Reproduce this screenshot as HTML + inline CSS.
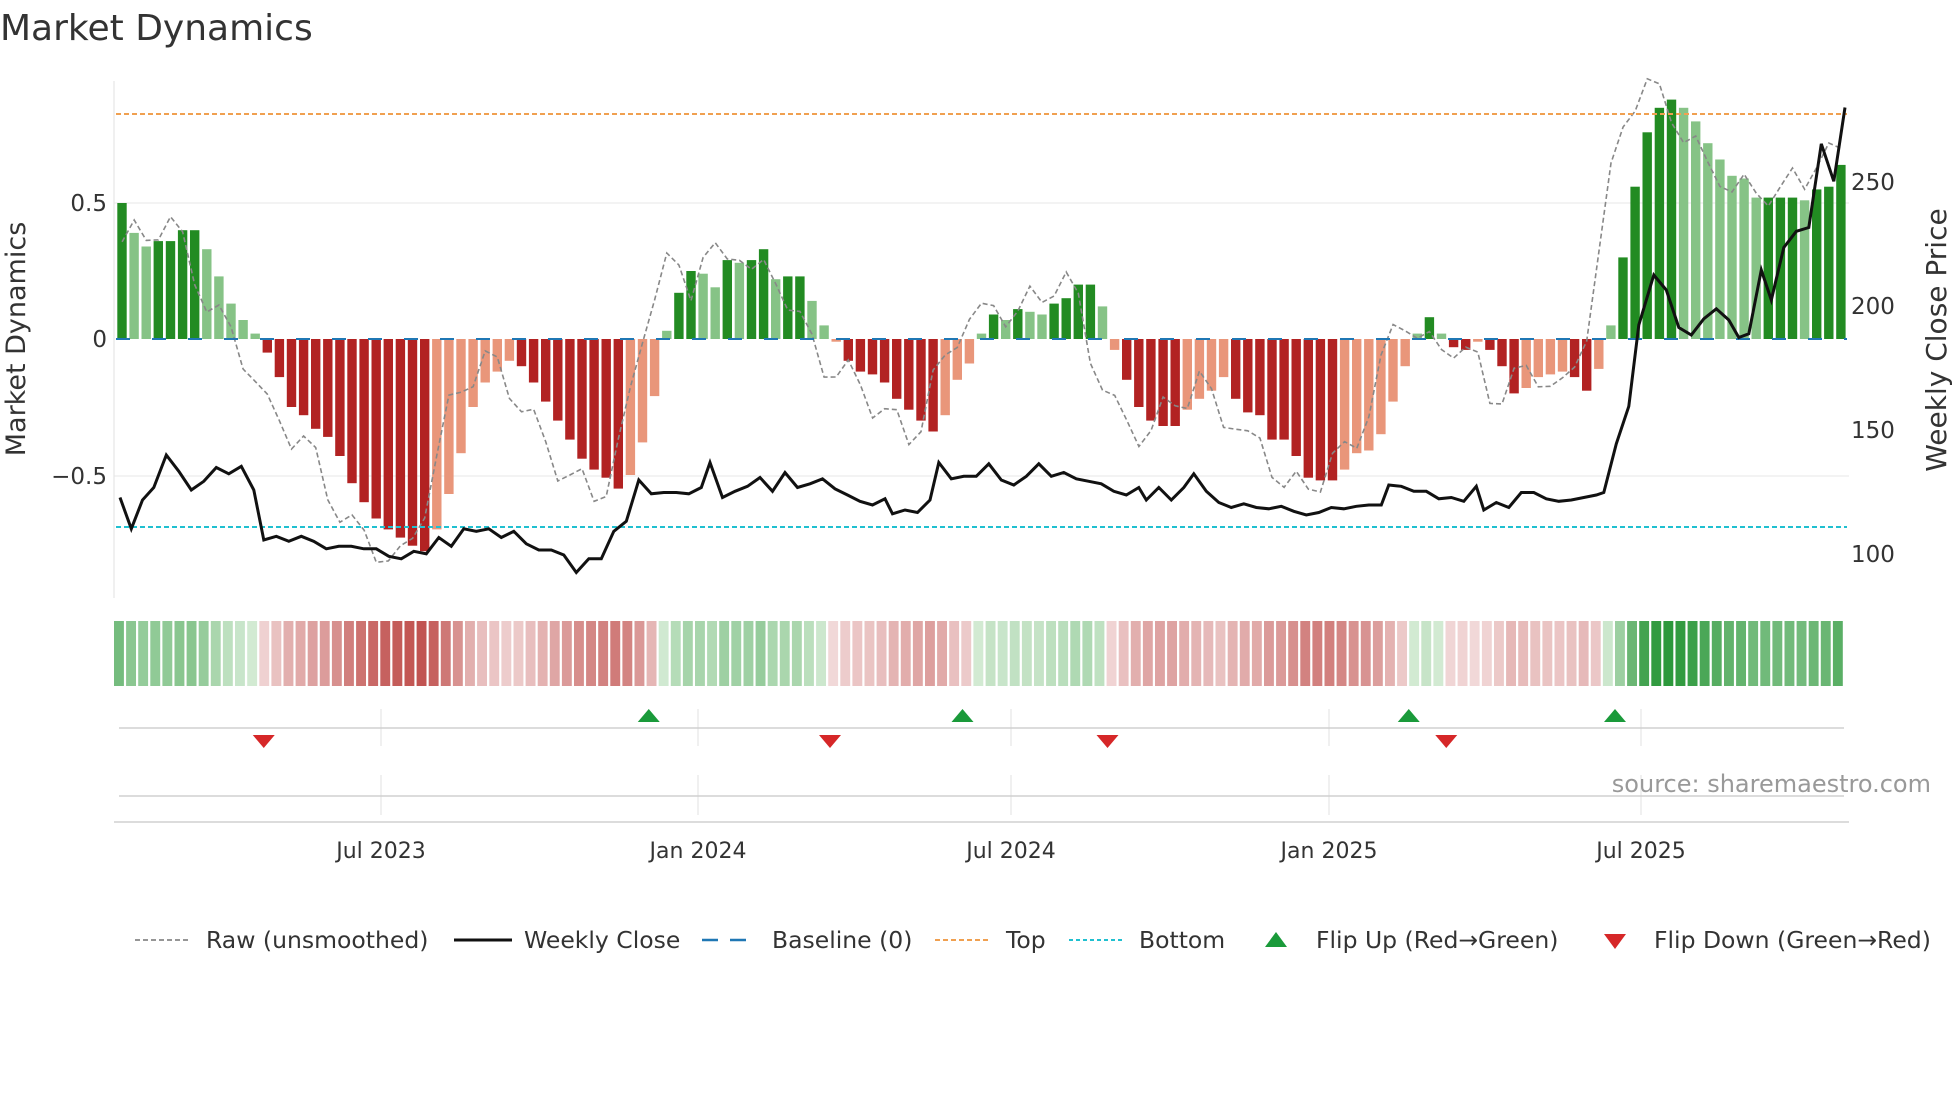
<!DOCTYPE html>
<html><head><meta charset="utf-8"><style>
html,body{margin:0;padding:0;background:#fff;}
body{width:1960px;height:1102px;overflow:hidden;font-family:"DejaVu Sans","Liberation Sans",sans-serif;}
</style></head><body>
<svg id="s" width="1960" height="1102" xmlns="http://www.w3.org/2000/svg" font-family="DejaVu Sans, Liberation Sans, sans-serif"></svg>
<script>
var V=[0.5,0.39,0.34,0.36,0.36,0.40,0.40,0.33,0.23,0.13,0.07,0.02,
-0.05,-0.14,-0.25,-0.28,-0.33,-0.36,-0.43,-0.53,-0.60,-0.66,-0.70,-0.73,-0.76,-0.78,
-0.70,-0.57,-0.42,-0.25,-0.16,-0.12,-0.08,
-0.10,-0.16,-0.23,-0.30,-0.37,-0.44,-0.48,-0.51,-0.55,-0.50,-0.38,-0.21,
0.03,0.17,0.25,0.24,0.19,0.29,0.28,0.29,0.33,0.22,0.23,0.23,0.14,0.05,
-0.01,-0.08,-0.12,-0.13,-0.16,-0.22,-0.26,-0.30,-0.34,-0.28,-0.15,-0.09,
0.02,0.09,0.07,0.11,0.10,0.09,0.13,0.15,0.20,0.20,0.12,
-0.04,-0.15,-0.25,-0.30,-0.32,-0.32,-0.26,-0.22,-0.19,-0.14,-0.22,-0.27,-0.28,-0.37,-0.37,-0.43,-0.51,-0.52,-0.52,-0.48,-0.42,-0.41,-0.35,-0.23,-0.10,
0.02,0.08,0.02,
-0.03,-0.04,-0.01,-0.04,-0.10,-0.20,-0.18,-0.14,-0.13,-0.12,-0.14,-0.19,-0.11,
0.05,0.30,0.56,0.76,0.85,0.88,0.85,0.80,0.72,0.66,0.60,0.59,0.52,0.52,0.52,0.52,0.51,0.55,0.56,0.64];
var P=[[96,398],[105,423],[114,400],[123,390],[133,364],[143,377],[153,392],[163,385],[173,374],[183,379],[193,373],[203,392],[211,432],[221,429],[231,433],[241,429],[251,433],[261,439],[271,437],[281,437],[291,439],[301,439],[311,445],[321,447],[331,441],[341,443],[351,430],[361,437],[371,423],[381,425],[391,423],[401,430],[411,425],[421,435],[431,440],[441,440],[451,444],[461,458],[471,447],[481,447],[491,425],[501,417],[511,384],[521,395],[531,394],[541,394],[551,395],[561,390],[568,370],[578,398],[588,393],[598,389],[608,382],[618,393],[628,378],[638,390],[648,387],[658,383],[668,391],[678,396],[688,401],[698,404],[708,399],[714,411],[724,408],[734,410],[744,400],[751,370],[761,383],[771,381],[781,381],[791,371],[801,384],[811,388],[821,381],[831,371],[841,381],[851,378],[861,383],[871,385],[881,387],[891,393],[901,396],[911,390],[917,400],[927,390],[937,400],[947,390],[955,379],[965,393],[975,402],[985,406],[995,403],[1005,406],[1015,407],[1025,405],[1035,409],[1045,412],[1055,410],[1065,406],[1075,407],[1085,405],[1095,404],[1105,404],[1111,388],[1121,389],[1131,393],[1141,393],[1151,399],[1161,398],[1171,401],[1181,389],[1187,408],[1197,402],[1207,406],[1217,394],[1227,394],[1237,399],[1247,401],[1257,400],[1267,398],[1277,396],[1283,394],[1293,355],[1303,325],[1311,260],[1323,220],[1333,232],[1343,262],[1353,268],[1363,255],[1373,247],[1383,256],[1391,270],[1399,267],[1409,216],[1417,240],[1427,198],[1437,185],[1447,182],[1457,115],[1467,145],[1476,86]];
var o='';
function t(x,y,s,sz,a,c,extra){o+='<text x="'+x+'" y="'+y+'" font-size="'+sz+'" text-anchor="'+(a||'start')+'" fill="'+(c||'#333')+'" '+(extra||'')+'>'+s+'</text>';}
function L(x1,y1,x2,y2,c,w,d){o+='<line x1="'+x1+'" y1="'+y1+'" x2="'+x2+'" y2="'+y2+'" stroke="'+c+'" stroke-width="'+(w||1)+'"'+(d?' stroke-dasharray="'+d+'"':'')+'/>';}
t(0,40,'Market Dynamics',36,'start','#333');
L(114,203,1849,203,'#ececec',1.2);L(114,476,1849,476,'#ececec',1.2);
L(114,81,114,598,'#e6e6e6',1.2);
var x0=116,x1=1847,N=V.length,st=(x1-x0)/N,bw=st*0.78;
function yv(v){return 339-v*272;}
for(var i=0;i<N;i++){var v=V[i],p=i?V[i-1]:0,inc=Math.abs(v)>=Math.abs(p)-0.001;
var c=v>=0?(inc?'#228b22':'#86c386'):(inc?'#b22222':'#e9967a');
var y=Math.min(yv(v),339),h=Math.abs(yv(v)-339);
o+='<rect x="'+(x0+i*st+(st-bw)/2).toFixed(1)+'" y="'+y.toFixed(1)+'" width="'+bw.toFixed(1)+'" height="'+h.toFixed(1)+'" fill="'+c+'"/>';}
var r='';for(var i=0;i<N;i++){var j=Math.min(N-1,i+2),v=V[j]*1.05+0.06*Math.sin(i*1.7);r+=(x0+i*st+st/2).toFixed(1)+','+yv(v).toFixed(1)+' ';}
o+='<polyline points="'+r+'" fill="none" stroke="#888" stroke-width="1.6" stroke-dasharray="5,3"/>';
L(116,339,1847,339,'#1f77b4',2,'14,22');
L(116,114,1847,114,'#f0a050',2,'5,3');
L(116,527,1847,527,'#20c0d0',2,'5,3');
var q='';P.forEach(function(a){q+=(a[0]*1.25).toFixed(1)+','+(a[1]*1.25).toFixed(1)+' ';});
o+='<polyline points="'+q+'" fill="none" stroke="#111" stroke-width="3"/>';
t(107,211,'0.5',23,'end');t(107,347,'0',23,'end');t(107,484,'−0.5',23,'end');
t(1851,190,'250',23);t(1851,314,'200',23);t(1851,438,'150',23);t(1851,562,'100',23);
t(25,339,'Market Dynamics',27,'middle','#333','transform="rotate(-90 25 339)"');
t(1946,340,'Weekly Close Price',28,'middle','#333','transform="rotate(-90 1946 340)"');
function mix(a,b,f){f=Math.max(0,Math.min(1,f));var r=[0,1,2].map(function(k){return Math.round(a[k]+(b[k]-a[k])*f)});return 'rgb('+r.join(',')+')';}
for(var i=0;i<N;i++){var v=V[i],c=v>=0?mix([214,236,214],[40,150,55],v/0.9):mix([242,218,218],[192,80,77],-v/0.8);
o+='<rect x="'+(x0-2+i*st).toFixed(1)+'" y="621" width="'+(st-2.2).toFixed(1)+'" height="65" fill="'+c+'"/>';}
var tx=[381,698,1011,1329,1641];
tx.forEach(function(x){L(x,709,x,746,'#e6e6e6',1.2);L(x,775,x,815,'#e6e6e6',1.2);});
L(119,728,1844,728,'#d0d0d0',1.5);L(119,796,1844,796,'#d0d0d0',1.5);
L(114,822,1849,822,'#d0d0d0',1.5);
[519,770,1127,1292].forEach(function(x){x*=1.25;o+='<polygon points="'+(x-11)+',722 '+(x+11)+',722 '+x+',709" fill="#1a9a3a"/>';});
[211,664,886,1157].forEach(function(x){x*=1.25;o+='<polygon points="'+(x-11)+',735 '+(x+11)+',735 '+x+',748" fill="#d62728"/>';});
t(1931,792,'source: sharemaestro.com',24,'end','#999');
['Jul 2023','Jan 2024','Jul 2024','Jan 2025','Jul 2025'].forEach(function(s,i){t(tx[i],858,s,22,'middle');});
var ly=940,fs=23.5;
L(135,ly,191,ly,'#888',1.8,'5,3');t(206,ly+8,'Raw (unsmoothed)',fs);
L(454,ly,512,ly,'#111',3);t(524,ly+8,'Weekly Close',fs);
L(702,ly,758,ly,'#1f77b4',2.5,'16,12');t(772,ly+8,'Baseline (0)',fs);
L(935,ly,990,ly,'#f0a050',2,'5,3');t(1006,ly+8,'Top',fs);
L(1069,ly,1125,ly,'#20c0d0',2,'4,3');t(1139,ly+8,'Bottom',fs);
o+='<polygon points="1265,'+(ly+7)+' 1287,'+(ly+7)+' 1276,'+(ly-8)+'" fill="#1a9a3a"/>';t(1316,ly+8,'Flip Up (Red→Green)',fs);
o+='<polygon points="1604,'+(ly-6)+' 1626,'+(ly-6)+' 1615,'+(ly+9)+'" fill="#d62728"/>';t(1654,ly+8,'Flip Down (Green→Red)',fs);
document.getElementById('s').innerHTML=o;
</script>
</body></html>
